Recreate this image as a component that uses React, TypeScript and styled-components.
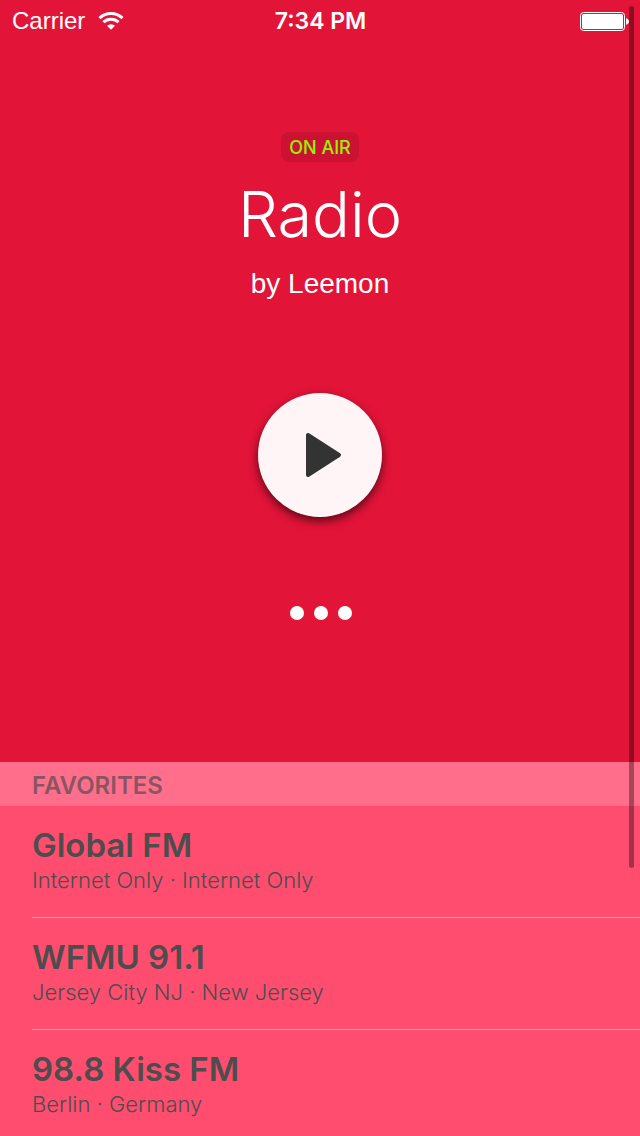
import React from "react";
import styled, { createGlobalStyle } from "styled-components";

const GlobalStyle = createGlobalStyle`
  *, *::before, *::after { box-sizing: border-box; }
  body {
    margin: 0;
    background: #ff4d70;
    font-family: "Liberation Sans", Arial, sans-serif;
  }
  h1, h2, h3, p, ul { margin: 0; padding: 0; font-weight: 400; }
  button { border: 0; padding: 0; font: inherit; cursor: pointer; }
`;

const Screen = styled.div`
  position: relative;
  height: 100vh;
  overflow: hidden;
`;

const Hero = styled.header`
  display: flex;
  flex-direction: column;
  align-items: center;
  padding-bottom: 134px;
  background: #e21438;
  color: #fff;
`;

const StatusBar = styled.div`
  display: grid;
  grid-template-columns: 1fr auto 1fr;
  align-items: center;
  width: 100%;
  height: 40px;
  padding: 0 11px 0 12px;
  font-size: 24px;
  line-height: 42px;
`;

const Carrier = styled.div`
  display: flex;
  align-items: center;
  gap: 13px;
`;

const Clock = styled.time`
  font-family: Inter, sans-serif;
  font-size: 23px;
  font-weight: 600;
`;

const BatterySlot = styled.div`
  display: flex;
  justify-content: flex-end;
`;

const OnAir = styled.span`
  height: 30px;
  margin-top: 92px;
  padding: 0 8px;
  border-radius: 8px;
  background: #cb1233;
  color: #93f500;
  font-family: Inter, sans-serif;
  font-size: 18px;
  font-weight: 500;
  line-height: 32px;
`;

const Title = styled.h1`
  margin-top: 12px;
  font-family: Inter, sans-serif;
  font-size: 63px;
  font-weight: 300;
  line-height: 80px;
`;

const Byline = styled.p`
  margin-top: 12px;
  font-size: 28px;
  line-height: 36px;
`;

const PlayButton = styled.button`
  display: grid;
  place-items: center;
  width: 124px;
  height: 124px;
  margin-top: 91px;
  border-radius: 50%;
  background: #fff4f6;
  box-shadow: 0 4px 10px rgba(0, 0, 0, 0.6);
`;

const MoreButton = styled.button`
  display: flex;
  gap: 10px;
  margin-top: 81px;
  padding: 8px 0 8px 2px;
  background: none;
`;

const Dot = styled.span`
  width: 14px;
  height: 14px;
  border-radius: 50%;
  background: #fff;
`;

const SectionTitle = styled.h2`
  height: 44px;
  padding: 2px 32px 0;
  background: #ff6f8b;
  color: #8a5563;
  font-family: Inter, sans-serif;
  font-size: 24px;
  font-weight: 600;
  line-height: 44px;
`;

const StationList = styled.ul`
  padding-left: 32px;
  list-style: none;
`;

const Station = styled.li`
  height: 112px;
  padding-top: 20px;
  border-bottom: 1px solid #ff9eb1;
  color: #4d4d4d;
`;

const StationName = styled.h3`
  font-family: Inter, sans-serif;
  font-size: 33px;
  font-weight: 600;
  line-height: 38px;
`;

const StationPlace = styled.p`
  font-family: Inter, sans-serif;
  font-size: 22px;
  font-weight: 300;
  line-height: 32px;
`;

const ScrollThumb = styled.div`
  position: absolute;
  top: 6px;
  right: 6px;
  width: 5px;
  height: 862px;
  border-radius: 3px;
  background: rgba(0, 0, 0, 0.36);
`;

const WifiIcon = () => (
  <svg width="26" height="20" viewBox="0 0 26 20" fill="none" stroke="#fff" strokeWidth="3" aria-label="Wi-Fi">
    <path d="M1.5 7.2A16.5 16.5 0 0 1 24.5 7.2" />
    <path d="M5.4 11.2A11 11 0 0 1 20.6 11.2" />
    <path d="M9 14.8A5.7 5.7 0 0 1 17 14.8L13 18.8Z" fill="#fff" stroke="none" />
  </svg>
);

const BatteryIcon = () => (
  <svg width="49" height="20" viewBox="0 0 49 20" aria-label="Battery full">
    <rect x="0.5" y="1.5" width="44" height="18" rx="3" fill="none" stroke="#fff" />
    <rect x="2" y="3" width="41" height="15" rx="1.5" fill="#fff" />
    <path d="M46 7.2Q49 8 49 10.5Q49 13 46 13.8Z" fill="#fff" />
  </svg>
);

const PlayIcon = () => (
  <svg width="48" height="48" viewBox="0 0 48 48" aria-hidden="true">
    <path d="M12 4L43 24L12 44Z" fill="#333" stroke="#333" strokeWidth="4" strokeLinejoin="round" />
  </svg>
);

const stations = [
  { name: "Global FM", place: "Internet Only · Internet Only" },
  { name: "WFMU 91.1", place: "Jersey City NJ · New Jersey" },
  { name: "98.8 Kiss FM", place: "Berlin · Germany" },
];

export default function App() {
  return (
    <Screen>
      <GlobalStyle />
      <Hero>
        <StatusBar>
          <Carrier>
            Carrier
            <WifiIcon />
          </Carrier>
          <Clock>7:34 PM</Clock>
          <BatterySlot>
            <BatteryIcon />
          </BatterySlot>
        </StatusBar>
        <OnAir>ON AIR</OnAir>
        <Title>Radio</Title>
        <Byline>by Leemon</Byline>
        <PlayButton type="button" aria-label="Play">
          <PlayIcon />
        </PlayButton>
        <MoreButton type="button" aria-label="More options">
          <Dot />
          <Dot />
          <Dot />
        </MoreButton>
      </Hero>
      <main>
        <SectionTitle>FAVORITES</SectionTitle>
        <StationList>
          {stations.map((station) => (
            <Station key={station.name}>
              <StationName>{station.name}</StationName>
              <StationPlace>{station.place}</StationPlace>
            </Station>
          ))}
        </StationList>
      </main>
      <ScrollThumb />
    </Screen>
  );
}
